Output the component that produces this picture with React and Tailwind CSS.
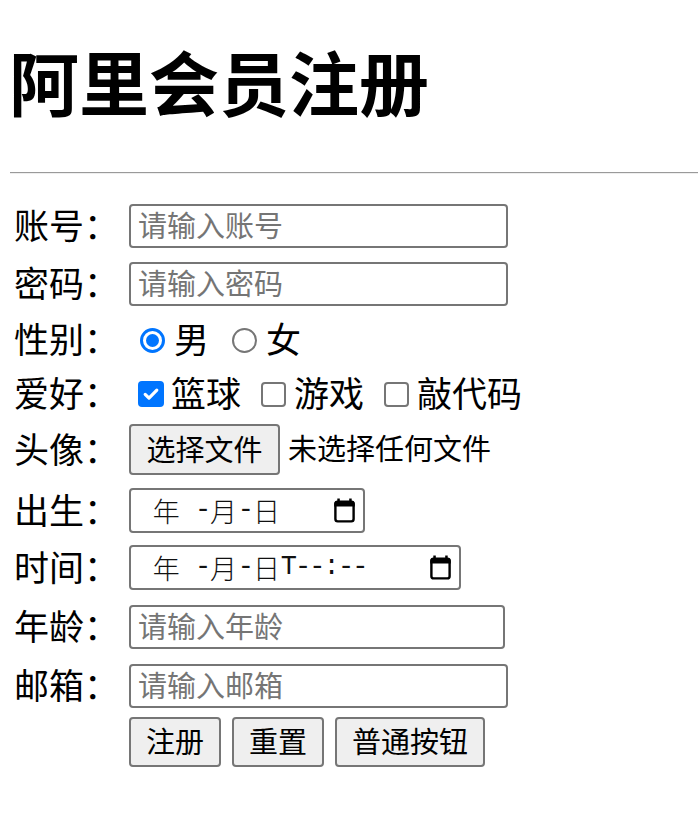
import React from 'react';

const FONT = { fontFamily: '"Noto Sans CJK SC", "Noto Sans", sans-serif' };

function CalendarIcon() {
  return (
    <svg width="23" height="25" viewBox="0 0 24 26" className="shrink-0">
      <rect x="4.5" y="0.5" width="2.6" height="4" fill="#000" />
      <rect x="16.9" y="0.5" width="2.6" height="4" fill="#000" />
      <path d="M1.3 6.3a3 3 0 0 1 3-3h15.4a3 3 0 0 1 3 3v2.6H1.3z" fill="#000" />
      <rect x="2.5" y="3.8" width="19" height="20.6" rx="2.4" fill="none" stroke="#000" strokeWidth="2.5" />
    </svg>
  );
}

// date text: CJK cells full width, ascii cells half width like the reference
function DateText({ parts }) {
  return (
    <div className="flex items-center text-[#111] whitespace-pre">
      {parts.map((p, i) =>
        p.cjk ? (
          <span key={i} className="text-[27px] font-light leading-none w-[28.6px] text-center">
            {p.t}
          </span>
        ) : (
          <span
            key={i}
            className="text-[27px] leading-none tracking-[-1.9px]"
            style={{ fontFamily: '"Liberation Mono", monospace' }}
          >
            {p.t}
          </span>
        )
      )}
    </div>
  );
}

function Radio({ checked }) {
  return checked ? (
    <span className="w-[25px] h-[25px] rounded-full border-[3px] border-[#0075ff] flex items-center justify-center shrink-0">
      <span className="w-[13px] h-[13px] rounded-full bg-[#0075ff]" />
    </span>
  ) : (
    <span className="w-[25px] h-[25px] rounded-full border-2 border-[#767676] shrink-0" />
  );
}

function Checkbox({ checked }) {
  return checked ? (
    <span className="w-[26px] h-[26px] rounded-[4px] bg-[#0075ff] flex items-center justify-center shrink-0">
      <svg width="18" height="18" viewBox="0 0 17 17">
        <path d="M3 8.8l3.6 3.6L14 4.8" fill="none" stroke="#fff" strokeWidth="3" strokeLinecap="round" strokeLinejoin="round" />
      </svg>
    </span>
  ) : (
    <span className="w-[25px] h-[25px] rounded-[4px] border-2 border-[#767676] shrink-0" />
  );
}

function Label({ children }) {
  return <span className="w-[115px] shrink-0 pb-[5px] text-[35px] leading-none text-black">{children}</span>;
}

function TextInput({ placeholder, width = 'w-[379px]' }) {
  return (
    <input
      type="text"
      placeholder={placeholder}
      className={`${width} h-[44px] border-2 border-[#767676] rounded-[4px] pl-[7px] pb-[4px] text-[29px] leading-none text-black placeholder:text-[#757575] bg-white outline-none`}
      style={FONT}
    />
  );
}

function Btn({ children }) {
  return (
    <button
      type="button"
      className="h-[50px] px-[15px] pb-[3px] border-2 border-[#767676] rounded-[4px] bg-[#efefef] text-[29px] leading-none text-black"
      style={FONT}
    >
      {children}
    </button>
  );
}

export default function App() {
  const dateParts = [
    { t: '年', cjk: true },
    { t: ' -', cjk: false },
    { t: '月', cjk: true },
    { t: '-', cjk: false },
    { t: '日', cjk: true },
  ];
  const dtParts = [...dateParts, { t: 'T--:--', cjk: false }];

  return (
    <div className="bg-white min-h-[824px] text-black" style={FONT}>
      <h1 className="pt-[46px] pl-[9px] text-[70px] font-bold leading-none">阿里会员注册</h1>
      <hr className="mt-[56px] ml-[10px] h-0 border-0 border-t border-b border-t-[#9a9a9a] border-b-[#eeeeee]" />

      <form className="pl-[14px] flex flex-col">
        <div className="mt-[30px] h-[44px] flex items-center">
          <Label>账号：</Label>
          <TextInput placeholder="请输入账号" />
        </div>

        <div className="mt-[14px] h-[44px] flex items-center">
          <Label>密码：</Label>
          <TextInput placeholder="请输入密码" />
        </div>

        <div className="mt-[12px] h-[44px] flex items-center text-[35px] leading-none">
          <Label>性别：</Label>
          <label className="flex items-center gap-[9px] ml-[11px]">
            <Radio checked />
            <span className="pb-[5px]">男</span>
          </label>
          <label className="flex items-center gap-[9px] ml-[23px]">
            <Radio />
            <span className="pb-[5px]">女</span>
          </label>
        </div>

        <div className="mt-[10px] h-[44px] flex items-center text-[35px] leading-none">
          <Label>爱好：</Label>
          <label className="flex items-center gap-[7px] ml-[9px]">
            <Checkbox checked />
            <span className="pb-[5px]">篮球</span>
          </label>
          <label className="flex items-center gap-[8px] ml-[20px]">
            <Checkbox />
            <span className="pb-[5px]">游戏</span>
          </label>
          <label className="flex items-center gap-[8px] ml-[20px]">
            <Checkbox />
            <span className="pb-[5px]">敲代码</span>
          </label>
        </div>

        <div className="mt-[8px] h-[51px] flex items-center">
          <Label>头像：</Label>
          <button
            type="button"
            className="h-[51px] w-[151px] pb-[3px] border-2 border-[#767676] rounded-[4px] bg-[#efefef] text-[29px] leading-none"
            style={FONT}
          >
            选择文件
          </button>
          <span className="ml-[8px] pb-[4px] text-[29px] leading-none">未选择任何文件</span>
        </div>

        <div className="mt-[13px] h-[45px] flex items-center">
          <Label>出生：</Label>
          <div className="w-[236px] h-[45px] border-2 border-[#767676] rounded-[4px] flex items-center justify-between pl-[21px] pr-[7px]">
            <DateText parts={dateParts} />
            <CalendarIcon />
          </div>
        </div>

        <div className="mt-[12px] h-[45px] flex items-center">
          <Label>时间：</Label>
          <div className="w-[332px] h-[45px] border-2 border-[#767676] rounded-[4px] flex items-center justify-between pl-[21px] pr-[7px]">
            <DateText parts={dtParts} />
            <CalendarIcon />
          </div>
        </div>

        <div className="mt-[15px] h-[44px] flex items-center">
          <Label>年龄：</Label>
          <TextInput placeholder="请输入年龄" width="w-[376px]" />
        </div>

        <div className="mt-[14px] h-[45px] flex items-center">
          <Label>邮箱：</Label>
          <TextInput placeholder="请输入邮箱" />
        </div>

        <div className="mt-[9px] h-[50px] flex items-center gap-[11px] pl-[115px]">
          <Btn>注册</Btn>
          <Btn>重置</Btn>
          <Btn>普通按钮</Btn>
        </div>
      </form>
    </div>
  );
}
